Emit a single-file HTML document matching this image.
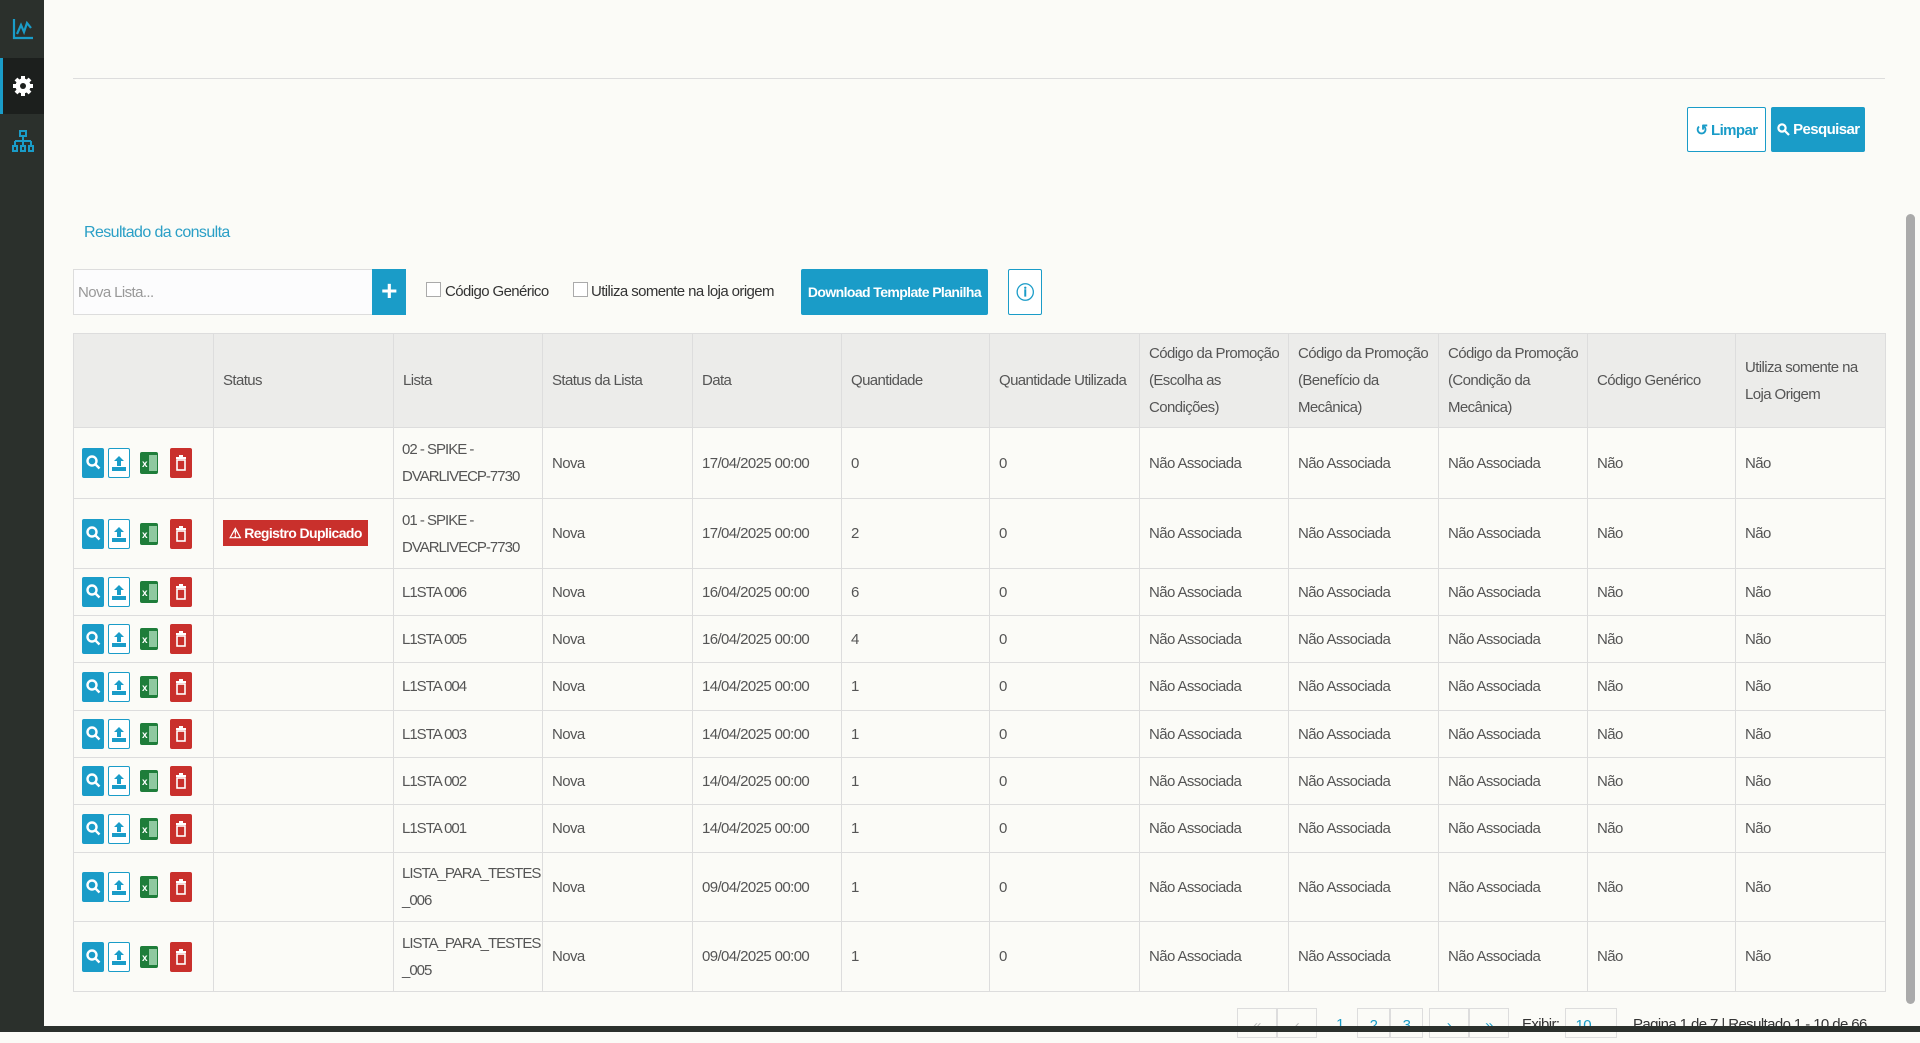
<!DOCTYPE html>
<html><head><meta charset="utf-8">
<style>
*{box-sizing:border-box;margin:0;padding:0}
body{width:1920px;height:1032px;overflow:hidden;background:#fbfbf7;font-family:"Liberation Sans",sans-serif;color:#555;font-size:15px;letter-spacing:-0.6px;position:relative}
.side{position:absolute;left:0;top:0;width:44px;height:1032px;background:#2b302c}
.side .act{position:absolute;left:0;top:58px;width:44px;height:56px;background:#1c1f1d;border-left:3px solid #1a9cc8}
.hr{position:absolute;left:73px;top:78px;width:1812px;height:1px;background:#ddd}
.btn{position:absolute;height:45px;border-radius:2px;font-size:15px;display:flex;align-items:center;justify-content:center;font-weight:bold;white-space:nowrap}
.res{position:absolute;left:84px;top:224px;color:#2a9fc6;font-size:16px}
.inp{position:absolute;left:73px;top:269px;width:300px;height:46px;border:1px solid #ddd;background:#fcfcfd;color:#999;padding:14px 4px}
.plus{position:absolute;left:372px;top:269px;width:34px;height:46px;background:#1a9cc8;color:#fff;font-size:28px;font-weight:bold;text-align:center;line-height:44px}
.cb{position:absolute;top:282px;width:15px;height:15px;border:1px solid #aaa;background:#fff}
.lbl{position:absolute;top:283px;color:#333;white-space:nowrap}
table{position:absolute;left:73px;top:333px;border-collapse:collapse;table-layout:fixed;width:1812px}
td,th{border:1px solid #ddd;padding:0 9px;text-align:left;vertical-align:middle;font-weight:normal;line-height:27px;white-space:nowrap;overflow:hidden}
td.l{padding-left:8px;letter-spacing:-1px}
th{background:#ececea;height:94px;color:#555}
.ic{display:inline-block;width:22px;height:30px;vertical-align:middle;margin-right:4px;border-radius:2px;position:relative}
.s{background:#1a9cc8}.u{border:1px solid #1a9cc8;background:#fff}.d{background:#c9302c;margin-left:8px}
.x{width:18px;height:22px;background:#1e7d3a;margin-left:6px}
.ic svg{position:absolute;left:0;top:0}
.dup{display:inline-block;background:#c9302c;color:#fff;font-size:14px;font-weight:bold;padding:0 6px;line-height:26px}
.pg{position:absolute;top:1008px;height:30px;border:1px solid #ddd;font-size:15px;color:#1a9cc8;text-align:center;line-height:34px}
</style></head><body>
<div class="side">
<svg style="position:absolute;left:12px;top:18px" width="22" height="22" viewBox="0 0 22 22" fill="none" stroke="#1a9cc8" stroke-width="2.2"><path d="M2 1V20H21M5 16L9 7L12 14L15 5L19 10"/></svg>
<div class="act"><svg style="position:absolute;left:9px;top:17px" width="22" height="22" viewBox="0 0 22 22"><circle cx="11" cy="11" r="7.5" fill="#fff"/><g stroke="#fff" stroke-width="4"><path d="M11 1v20M1 11h20M4 4l14 14M18 4L4 18"/></g><circle cx="11" cy="11" r="3" fill="#1c1f1d"/></svg></div>
<svg style="position:absolute;left:12px;top:130px" width="22" height="22" viewBox="0 0 22 22" fill="none" stroke="#1a9cc8" stroke-width="2"><rect x="8" y="1" width="6" height="5"/><path d="M11 6v5M3 11h16M3 11v5M11 11v5M19 11v5"/><rect x="1" y="16" width="4" height="5"/><rect x="9" y="16" width="4" height="5"/><rect x="17" y="16" width="4" height="5"/></svg>
</div>
<div class="hr"></div>
<div class="btn" style="left:1687px;top:107px;width:79px;border:1px solid #1a9cc8;color:#1a9cc8;background:#fff">↺ Limpar</div>
<div class="btn" style="left:1771px;top:107px;width:94px;background:#1a9cc8;color:#fff"><svg width="13" height="13" viewBox="0 0 13 13" fill="none" stroke="#fff" stroke-width="2.2"><circle cx="5" cy="5" r="3.6"/><path d="M8 8l4 4"/></svg>&nbsp;Pesquisar</div>
<div class="res">Resultado da consulta</div>
<div class="inp">Nova Lista...</div>
<div class="plus">+</div>
<div class="cb" style="left:426px"></div><div class="lbl" style="left:445px">Código Genérico</div>
<div class="cb" style="left:573px"></div><div class="lbl" style="left:591px">Utiliza somente na loja origem</div>
<div class="btn" style="left:801px;top:269px;width:187px;height:46px;background:#1a9cc8;color:#fff;font-size:14px">Download Template Planilha</div>
<div class="btn" style="left:1008px;top:269px;width:34px;height:46px;border:1px solid #1a9cc8;background:#fff;color:#1a9cc8;font-size:18px">ⓘ</div>
<table>
<colgroup><col style="width:140px"><col style="width:180px"><col style="width:149px"><col style="width:150px"><col style="width:149px"><col style="width:148px"><col style="width:150px"><col style="width:149px"><col style="width:150px"><col style="width:149px"><col style="width:148px"><col style="width:150px"></colgroup>
<tr><th></th><th>Status</th><th>Lista</th><th>Status da Lista</th><th>Data</th><th>Quantidade</th><th>Quantidade Utilizada</th><th>Código da Promoção<br>(Escolha as<br>Condições)</th><th>Código da Promoção<br>(Benefício da<br>Mecânica)</th><th>Código da Promoção<br>(Condição da<br>Mecânica)</th><th>Código Genérico</th><th>Utiliza somente na<br>Loja Origem</th></tr>
<tbody id="tb"></tbody>
</table>
<script>
var rows=[["02 - SPIKE -<br>DVARLIVECP-7730","17/04/2025 00:00","0",71,0],["01 - SPIKE -<br>DVARLIVECP-7730","17/04/2025 00:00","2",70,1],["L1STA 006","16/04/2025 00:00","6",47],["L1STA 005","16/04/2025 00:00","4",47],["L1STA 004","14/04/2025 00:00","1",48],["L1STA 003","14/04/2025 00:00","1",47],["L1STA 002","14/04/2025 00:00","1",47],["L1STA 001","14/04/2025 00:00","1",48],["LISTA_PARA_TESTES<br>_006","09/04/2025 00:00","1",69],["LISTA_PARA_TESTES<br>_005","09/04/2025 00:00","1",70]];
var S='<span class="ic s"><svg width="22" height="30" viewBox="0 0 22 30" fill="none" stroke="#fff" stroke-width="2.4"><circle cx="10" cy="13" r="4.5"/><path d="M13.5 16.5l4 4"/></svg></span>';
var U='<span class="ic u"><svg width="20" height="28" viewBox="0 0 20 28" fill="#1a9cc8"><path d="M10 7l5 5h-3v5h-4v-5H5z"/><rect x="3" y="18" width="14" height="4"/></svg></span>';
var X='<span class="ic x"><svg width="18" height="22" viewBox="0 0 18 22"><rect x="9" y="3" width="8" height="16" fill="#8fc9a0"/><text x="2" y="15" font-size="10" fill="#fff" font-family="Liberation Sans" font-weight="bold">x</text></svg></span>';
var D='<span class="ic d"><svg width="22" height="30" viewBox="0 0 22 30" fill="#fff"><rect x="6" y="9" width="10" height="2"/><rect x="7" y="12" width="8" height="10" fill="none" stroke="#fff" stroke-width="1.6"/><rect x="9" y="7" width="4" height="2"/></svg></span>';
var h="";rows.forEach(function(r){h+='<tr style="height:'+r[3]+'px"><td style="padding-left:8px">'+S+U+X+D+'</td><td>'+(r[4]?'<span class="dup">⚠ Registro Duplicado</span>':'')+'</td><td class="l">'+r[0]+'</td><td>Nova</td><td>'+r[1]+'</td><td>'+r[2]+'</td><td>0</td><td>Não Associada</td><td>Não Associada</td><td>Não Associada</td><td>Não</td><td>Não</td></tr>'});document.getElementById("tb").innerHTML=h;
</script>
<div class="pg" style="left:1237px;width:40px;color:#bbb">«</div>
<div class="pg" style="left:1277px;width:40px;color:#bbb">‹</div>
<div class="pg" style="left:1320px;width:40px;border:none">1</div>
<div class="pg" style="left:1357px;width:33px">2</div>
<div class="pg" style="left:1390px;width:33px">3</div>
<div class="pg" style="left:1429px;width:40px">›</div>
<div class="pg" style="left:1469px;width:40px">»</div>
<div style="position:absolute;left:1522px;top:1016px;color:#333">Exibir:</div>
<div class="pg" style="left:1565px;width:52px">10 ⌄</div>
<div style="position:absolute;left:1633px;top:1016px;color:#333;white-space:nowrap">Pagina 1 de 7 | Resultado 1 - 10 de 66</div>
<div style="position:absolute;left:1906px;top:214px;width:9px;height:790px;background:#aaa;border-radius:5px"></div>
<div style="position:absolute;left:44px;top:1026px;width:1876px;height:6px;background:#2b302c"></div>
</body></html>
